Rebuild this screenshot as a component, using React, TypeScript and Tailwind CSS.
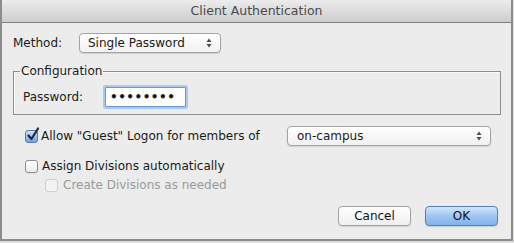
import React from 'react';

const font = { fontFamily: '"DejaVu Sans", "Liberation Sans", sans-serif' };

const Arrows = () => (
  <svg width="6" height="10" viewBox="0 0 6 10" className="shrink-0">
    <path d="M3 0.5 L5.5 4 H0.5 Z" fill="#4a4a4a" />
    <path d="M3 9.5 L5.5 6 H0.5 Z" fill="#4a4a4a" />
  </svg>
);

const PopUp = ({ label, className }: { label: string; className: string }) => (
  <div
    className={`flex h-[20px] items-center justify-between rounded-[4px] border border-[#a3a3a3] bg-gradient-to-b from-white to-[#f1f1f1] pl-[8px] pr-[8px] text-[12px] text-[#1a1a1a] shadow-[0_1px_1px_rgba(0,0,0,0.12)] ${className}`}
  >
    <span>{label}</span>
    <Arrows />
  </div>
);

const Checkbox = ({ checked, disabled }: { checked?: boolean; disabled?: boolean }) => (
  <div className="relative h-[13px] w-[13px] shrink-0">
    <div
      className={
        checked
          ? 'h-full w-full rounded-[3px] border border-[#5a7cad] bg-gradient-to-b from-[#cfe2fa] to-[#6fa4e4]'
          : disabled
          ? 'h-full w-full rounded-[3px] border border-[#cfcfcf] bg-[#f3f3f3]'
          : 'h-full w-full rounded-[3px] border border-[#8f8f8f] bg-gradient-to-b from-white to-[#ececec] shadow-[0_1px_0_rgba(0,0,0,0.06)]'
      }
    />
    {checked && (
      <svg
        width="14"
        height="15"
        viewBox="0 0 14 15"
        className="absolute left-[1px] top-[-3px]"
      >
        <path
          d="M2.5 8.5 L5.5 12 L12 1.5"
          fill="none"
          stroke="#1d2a3d"
          strokeWidth="2.2"
          strokeLinecap="round"
          strokeLinejoin="round"
        />
      </svg>
    )}
  </div>
);

const Button = ({ label, primary }: { label: string; primary?: boolean }) => (
  <div
    className={
      primary
        ? 'flex h-[20px] w-[73px] items-center justify-center rounded-[4px] border border-[#5b80b5] bg-gradient-to-b from-[#d3e6fc] via-[#9fc6f2] to-[#7fb3ee] text-[12px] text-[#111] shadow-[0_1px_1px_rgba(0,0,0,0.15)]'
        : 'flex h-[20px] w-[73px] items-center justify-center rounded-[4px] border border-[#a3a3a3] bg-gradient-to-b from-white to-[#f0f0f0] text-[12px] text-[#111] shadow-[0_1px_1px_rgba(0,0,0,0.12)]'
    }
  >
    {label}
  </div>
);

export default function App() {
  return (
    <div className="h-[243px] w-[514px] bg-[#dedede]" style={font}>
      <div className="flex h-[241px] w-[513px] flex-col overflow-hidden border-x-2 border-b-2 border-[#8c8c8c] bg-[#ececec]">
        <div className="flex h-[23px] shrink-0 items-center justify-center border-b border-[#808080] bg-gradient-to-b from-[#ececec] to-[#cdcdcd] text-[12.5px] text-[#4a4a4a]">
          Client Authentication
        </div>

        <div className="flex flex-col px-[11px] text-[12px] text-[#1a1a1a]">
          <div className="mt-[10px] flex items-center">
            <span className="w-[66px]">Method:</span>
            <PopUp label="Single Password" className="w-[142px]" />
          </div>

          <fieldset className="mt-[11px] w-[488px] border border-[#8e8e8e] p-0 shadow-[inset_1px_1px_0_#fafafa]">
            <legend className="ml-[6px] px-[1px] leading-[14px]">Configuration</legend>
            <div className="mb-[7px] mt-[9px] flex items-center pl-[9px]">
              <span className="w-[82px]">Password:</span>
              <div className="flex h-[20px] w-[81px] items-center rounded-[1px] border border-[#6b9ad8] bg-white pl-[4px] text-[12px] font-bold tracking-[0.5px] shadow-[0_0_0_2px_#a9c8f0]">
                ••••••••
              </div>
            </div>
          </fieldset>

          <div className="mt-[11px] flex h-[20px] items-center">
            <div className="ml-[12px] flex w-[262px] items-center gap-[3px]">
              <Checkbox checked />
              <span>Allow "Guest" Logon for members of</span>
            </div>
            <PopUp label="on-campus" className="w-[204px] pl-[9px]" />
          </div>

          <div className="mt-[12px] flex h-[16px] items-center gap-[4px] pl-[12px]">
            <Checkbox />
            <span>Assign Divisions automatically</span>
          </div>

          <div className="mt-[3px] flex h-[16px] items-center gap-[5px] pl-[32px]">
            <Checkbox disabled />
            <span className="text-[#9a9a9a]">Create Divisions as needed</span>
          </div>

          <div className="mt-[13px] flex justify-end gap-[14px] pr-[2px]">
            <Button label="Cancel" />
            <Button label="OK" primary />
          </div>
        </div>
      </div>
    </div>
  );
}
